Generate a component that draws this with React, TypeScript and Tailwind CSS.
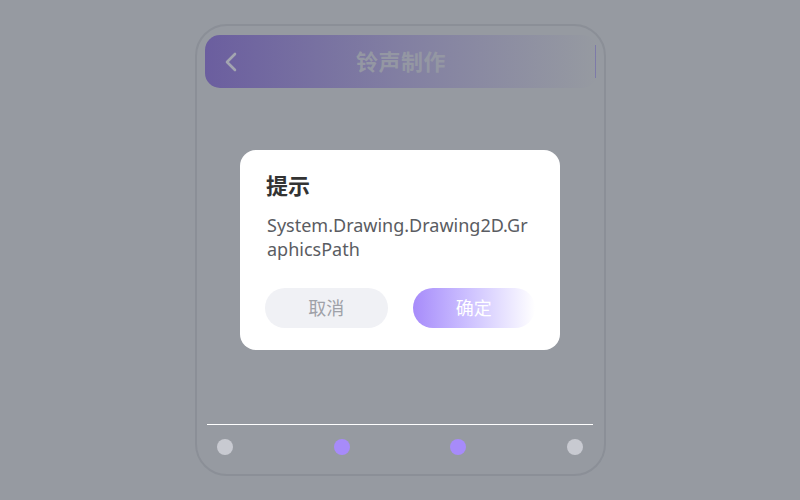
import React from "react";

export default function App() {
  const cjk = { fontFamily: '"Noto Sans", "Noto Sans CJK SC", sans-serif' };
  return (
    <div className="relative w-[800px] h-[500px] bg-[#969aa1] pt-[24px] pl-[195px] overflow-hidden" style={cjk}>
      {/* phone frame */}
      <div className="w-[411px] h-[452px] rounded-[32px] border-2 border-[#8b8f97] flex flex-col pt-[9px] pl-[8px]">
        {/* header */}
        <div className="relative w-[392px] h-[53px] rounded-[15px] bg-gradient-to-r from-[#6b5e9f] via-[#827fa2] to-[#969aa1] flex items-center">
          <svg className="ml-[19px]" width="14" height="20" viewBox="0 0 14 20" fill="none">
            <path d="M11 2 L3 10 L11 18" stroke="#a3a5b0" strokeWidth="2.6" strokeLinecap="round" strokeLinejoin="round" />
          </svg>
          <div className="absolute left-0 right-0 top-0 bottom-0 flex items-center justify-center pointer-events-none">
            <span className="text-[22px] font-bold text-[#9497a3] tracking-[0.5px]">铃声制作</span>
          </div>
          <div className="absolute right-[1px] top-[10px] w-[1px] h-[33px] bg-[#7d7aa8]" />
        </div>
        <div className="flex-1" />
        {/* bottom */}
        <div className="w-[386px] ml-[2px] h-[1px] bg-white" />
        <div className="w-[386px] ml-[2px] px-[10px] flex justify-between items-center mt-[14px] mb-[19px]">
          <div className="w-[16px] h-[16px] rounded-full bg-[#c8cad1]" />
          <div className="w-[16px] h-[16px] rounded-full bg-[#a78bfa]" />
          <div className="w-[16px] h-[16px] rounded-full bg-[#a78bfa]" />
          <div className="w-[16px] h-[16px] rounded-full bg-[#c8cad1]" />
        </div>
      </div>

      {/* dialog */}
      <div className="absolute left-[240px] top-[150px] w-[320px] h-[200px] bg-white rounded-[16px] px-[25px] pt-[20px] flex flex-col">
        <div className="pl-[1px] text-[22px] font-bold text-[#333333] leading-[30px]">提示</div>
        <div className="pl-[2px] mt-[13px] text-[18px] leading-[24px] text-[#5a5c62] break-all">
          System.Drawing.Drawing2D.GraphicsPath
        </div>
        <div className="mt-[27px] flex gap-[25px]">
          <div className="flex-1 h-[40px] rounded-full bg-[#f0f1f5] flex items-center justify-center text-[18px] text-[#9fa1a8]">
            取消
          </div>
          <div className="flex-1 h-[40px] rounded-full bg-gradient-to-r from-[#a78bfa] to-[#ffffff] flex items-center justify-center text-[18px] text-white">
            确定
          </div>
        </div>
      </div>
    </div>
  );
}
